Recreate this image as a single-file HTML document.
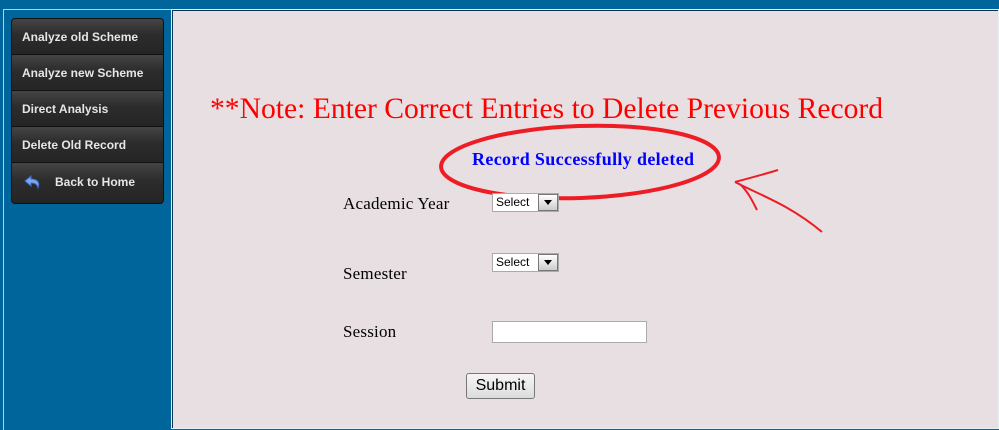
<!DOCTYPE html>
<html><head><meta charset="utf-8"><style>
body{margin:0;width:999px;height:420px;background:#00659a;position:relative;overflow:hidden;font-family:"Liberation Serif",serif}
.left{position:absolute;left:3px;top:9px;width:167px;height:420px;border-left:1px solid #b8d0e0;border-top:1px solid #b8d0e0}
.main{position:absolute;left:171px;top:9px;width:828px;height:420px;background:#e8dfe2;border:1px solid #e8eef2;box-shadow:inset 1px 1px 0 #0a3550;box-sizing:border-box}
.menu{position:absolute;left:11px;top:18px;width:151px;border:1px solid #111;border-radius:4px;overflow:hidden;background:#2a2a2a}
.menu div{height:35px;border-bottom:1px solid #111;background:linear-gradient(#444,#2c2c2c 45%,#252525);color:#e6e6e6;font:bold 12px "Liberation Sans",sans-serif;line-height:36px;padding-left:10px;position:relative}
.menu div:last-child{height:40px;border-bottom:none;padding-left:43px;line-height:38px}
.abs{position:absolute}
.sel{position:absolute;width:67px;height:19px;border:1px solid #aaa;background:#fff;font:12px "Liberation Sans",sans-serif;box-sizing:border-box;padding-left:3px;line-height:17px}
.sel i{position:absolute;right:0px;top:0px;width:20px;height:17px;border:1px solid #777;background:linear-gradient(#fff,#ccc);box-sizing:border-box}
.sel i:after{content:"";position:absolute;left:5px;top:5px;border:4px solid transparent;border-top:5px solid #000}
.lbl{position:absolute;font-size:17px;letter-spacing:0.2px;color:#000}
</style></head><body>
<div class="left"></div>
<div class="main"></div>
<div class="menu">
<div>Analyze old Scheme</div>
<div>Analyze new Scheme</div>
<div>Direct Analysis</div>
<div>Delete Old Record</div>
<div><svg class="abs" style="left:11px;top:11px" width="20" height="18" viewBox="0 0 20 18"><path d="M8 2 L2 7 L8 12 L8 9 C12 9 14 10 15 14 C17 9 15 5 8 5 Z" fill="#7aa8e8" stroke="#3a6ad0" stroke-width="1"/></svg>Back to Home</div>
</div>
<div class="abs" style="left:210px;top:93px;font-size:29.6px;color:#f00;white-space:nowrap">**Note: Enter Correct Entries to Delete Previous Record</div>
<div class="abs" style="left:472px;top:149px;font-size:18px;letter-spacing:0.35px;font-weight:bold;color:#00f;white-space:nowrap">Record Successfully deleted</div>
<svg class="abs" style="left:0;top:0" width="999" height="420">
<ellipse cx="580" cy="162" rx="139" ry="36" fill="none" stroke="#ee1c24" stroke-width="4" transform="rotate(-2 580 162)"/>
<path d="M735 182 C750 178 765 174 778 170 M735 182 C760 195 790 205 822 232 M740 184 C748 192 752 200 757 210" fill="none" stroke="#ee1c24" stroke-width="2"/>
</svg>
<div class="lbl" style="left:343px;top:194px">Academic Year</div>
<div class="lbl" style="left:343px;top:264px">Semester</div>
<div class="lbl" style="left:343px;top:322px">Session</div>
<div class="sel" style="left:492px;top:193px">Select<i></i></div>
<div class="sel" style="left:492px;top:253px">Select<i></i></div>
<div class="abs" style="left:492px;top:321px;width:155px;height:22px;border:1px solid #aaa;background:#fff;box-sizing:border-box"></div>
<div class="abs" style="left:466px;top:373px;width:69px;height:26px;border:1px solid #777;border-radius:3px;background:linear-gradient(#f6f6f6,#dcdcdc);box-sizing:border-box;font:16px 'Liberation Sans',sans-serif;text-align:center;line-height:24px">Submit</div>
</body></html>
